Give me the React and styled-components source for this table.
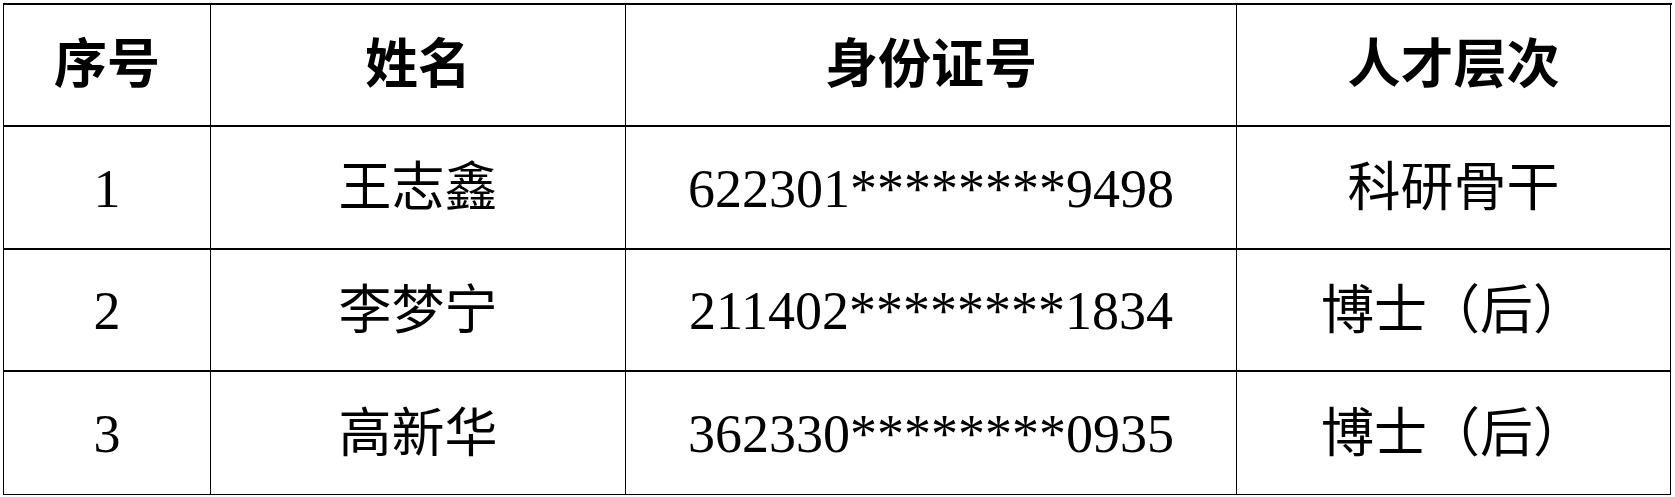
import React from "react";
import styled, { createGlobalStyle } from "styled-components";

const GlobalStyle = createGlobalStyle`
  html, body {
    margin: 0;
    padding: 0;
    background: #ffffff;
  }
  body {
    font-family: "Liberation Serif", "Noto Sans CJK SC", serif;
    color: #000000;
  }
`;

const Page = styled.div`
  padding: 3px 0 0 3px;
`;

const Table = styled.div`
  display: grid;
  grid-template-columns: 207px 415px 611px 434px;
  grid-template-rows: 122px 123px 122px 123px;
  width: 1668px;
  border-top: 2px solid #000;
  border-left: 1px solid #000;
`;

const Cell = styled.div`
  display: flex;
  align-items: center;
  justify-content: center;
  border-right: 1px solid #000;
  border-bottom: ${(p) => (p.$last ? "1px" : "2px")} solid #000;
  font-family: "Liberation Serif", "Noto Sans CJK SC", serif;
  font-size: ${(p) => (p.$num ? "54px" : "53px")};
  font-weight: ${(p) => (p.$head ? 700 : 400)};
  line-height: 1;
  white-space: nowrap;
  padding-top: ${(p) => (p.$head ? "0" : "2px")};
`;

const headers = ["序号", "姓名", "身份证号", "人才层次"];
const rows = [
  ["1", "王志鑫", "622301********9498", "科研骨干"],
  ["2", "李梦宁", "211402********1834", "博士（后）"],
  ["3", "高新华", "362330********0935", "博士（后）"],
];

export default function App() {
  return (
    <>
      <GlobalStyle />
      <Page>
        <Table>
          {headers.map((h) => (
            <Cell key={h} $head>
              {h}
            </Cell>
          ))}
          {rows.map((r, i) =>
            r.map((c, j) => (
              <Cell
                key={`${i}-${j}`}
                $last={i === rows.length - 1}
                $num={j === 0 || j === 2}
              >
                {c}
              </Cell>
            ))
          )}
        </Table>
      </Page>
    </>
  );
}
